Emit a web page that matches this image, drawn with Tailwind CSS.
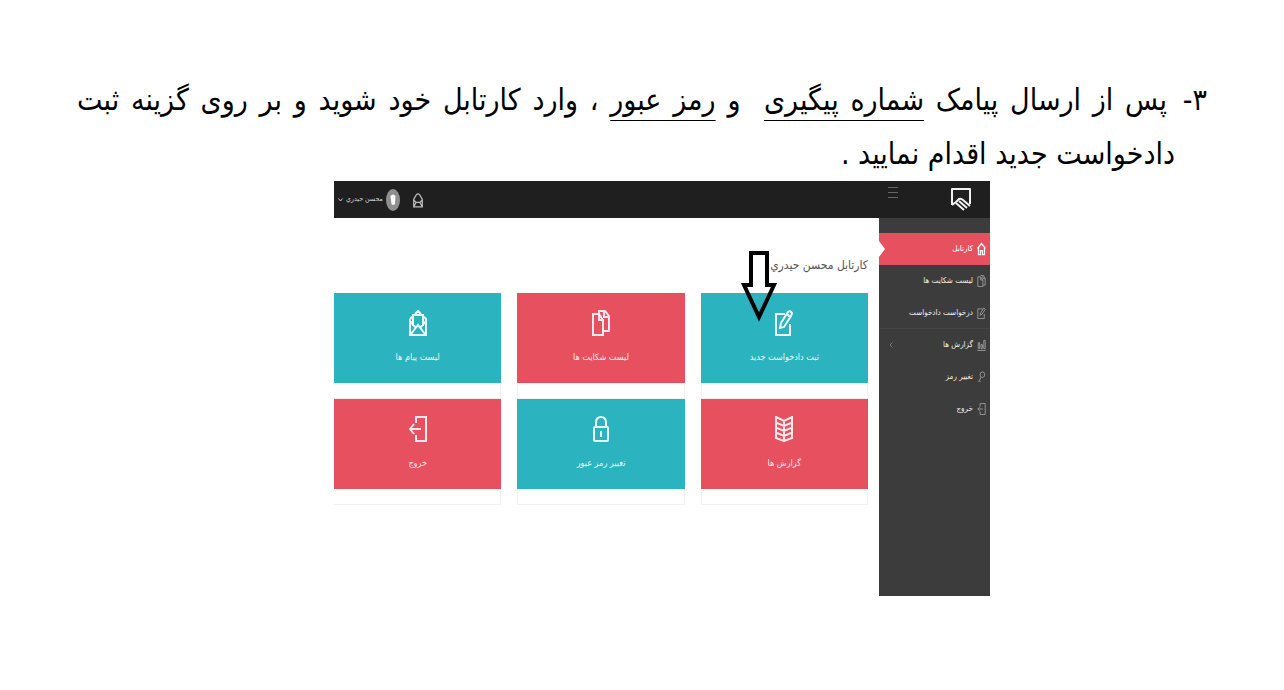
<!DOCTYPE html>
<html lang="fa" dir="rtl">
<head>
    <meta charset="UTF-8">
    <meta name="viewport" content="width=device-width, initial-scale=1.0">
    <title>راهنمای ثبت دادخواست</title>
    <script src="https://cdn.jsdelivr.net/npm/@tailwindcss/browser@4"></script>
</head>
<body class="bg-white text-black font-['DejaVu_Sans_Condensed','DejaVu_Sans',sans-serif]">
    <main class="px-[77px] pt-[73px] pb-[94px]">
        <!-- Step text -->
        <div class="flex text-[30px] leading-[54px]">
            <span class="w-8 shrink-0 whitespace-nowrap">۳-</span>
            <p class="grow">
                <span class="block ps-2 [text-align-last:justify]">پس از ارسال پیامک <span class="underline decoration-1 underline-offset-[10px]">شماره پیگیری</span>&nbsp; و <span class="underline decoration-1 underline-offset-[10px]">رمز عبور</span> ، وارد کارتابل خود شوید و بر روی گزینه ثبت</span>
                <span class="block">دادخواست جدید اقدام نمایید .</span>
            </p>
        </div>

        <!-- Panel -->
        <section class="w-full max-w-[656px] ms-[217px] bg-white">
            <header class="flex items-center h-[37px] bg-[#1f1f1f] text-gray-300 pe-1">
                <a href="#" class="w-[58px] flex justify-center" aria-label="صفحه اصلی">
                    <svg class="w-5 h-6" viewBox="0 0 20 24" fill="none" stroke="#f1f1f1" stroke-width="2" stroke-linejoin="round">
                        <path d="M1 17 V1 H19 V16"/>
                        <path d="M1 17 L5 14 L8 11 Q10 10 12 12 L19 18"/>
                        <path d="M8 13 L16 20 M5 15 L13 22"/>
                    </svg>
                </a>
                <button class="ms-[33px] mb-4" aria-label="منو">
                    <svg class="w-3 h-3" viewBox="0 0 12 12" stroke="#666" stroke-width="1"><path d="M1 1.500 H11 M1 6.500 H11 M1 11.500 H11"/></svg>
                </button>
                <a href="#" class="ms-auto" aria-label="پیام ها">
                    <svg class="w-3 h-4" viewBox="0 0 18 26" fill="none" stroke="#bbb" stroke-width="2"><path d="M2 12 L6 5 Q9 1 12 5 L16 12 V24 H2 Z M2 24 L6 17 H12 L16 24 M2 13 L6 17 M16 13 L12 17"/></svg>
                </a>
                <button class="flex items-center gap-[3px] ms-3 text-[7px]">
                    <svg class="w-[14px] h-[22px]" viewBox="0 0 14 22"><ellipse cx="7" cy="11" rx="7" ry="11" fill="#8f8f8f"/><path d="M4.500 7 Q7 4 9.500 7 L9 15 Q7 17 5.500 15 Z" fill="#fff"/></svg>
                    <span>محسن حيدري</span>
                    <svg class="w-[5px] h-2" viewBox="0 0 5 8" fill="none" stroke="#ccc"><path d="M.5 2.500 L2.500 5 L4.500 2.500"/></svg>
                </button>
            </header>

            <div class="flex">
                <!-- Sidebar -->
                <nav class="w-[111px] shrink-0 bg-[#3c3c3c] pt-[15px] pb-[171px] text-[8px] text-[#f0f0f0]">
                    <a href="#" class="relative flex items-center gap-1 h-8 ps-1 bg-[#e7505f] text-white">
                        <svg class="w-[9px] h-[14px]" viewBox="0 0 18 26" fill="none" stroke="currentColor" stroke-width="2.500"><path d="M1 12 L9 2 L17 12 M3 10 V24 H7 V16 H11 V24 H15 V10"/></svg>
                        <span>کارتابل</span>
                        <svg class="absolute left-0 top-2 w-[6px] h-4" viewBox="0 0 6 16"><path d="M0 0 L6 8 L0 16 Z" fill="#fff"/></svg>
                    </a>
                    <a href="#" class="flex items-center gap-1 h-8 ps-1">
                        <svg class="w-[9px] h-3" viewBox="0 0 18 26" fill="none" stroke="#999" stroke-width="2"><path d="M7 1 H13 L17 7 V22 H12 M12 1 V8 H17 M1 4 H7 L12 11 V25 H1 Z M7 4 V11 H12"/></svg>
                        <span>لیست شکایت ها</span>
                    </a>
                    <a href="#" class="flex items-center gap-1 h-8 ps-1 border-b border-[#454545]">
                        <svg class="w-[9px] h-3" viewBox="0 0 18 26" fill="none" stroke="#999" stroke-width="2"><path d="M11 4 H1 V25 H15 V15 M6 18 L7 13 L14 2 L17 5 L10 16 Z"/></svg>
                        <span>درخواست دادخواست</span>
                    </a>
                    <a href="#" class="flex items-center gap-1 h-8 ps-1">
                        <svg class="w-[9px] h-3" viewBox="0 0 18 26" fill="none" stroke="#999" stroke-width="2"><path d="M0 25 H18 M2 21 V8 H5 V21 Z M8 21 V12 H11 V21 Z M14 21 V3 H17 V21 Z"/></svg>
                        <span>گزارش ها</span>
                        <svg class="w-1 h-[6px] ms-auto me-[10px]" viewBox="0 0 4 6" fill="none" stroke="#777"><path d="M3.500 .5 L1 3 L3.500 5.500"/></svg>
                    </a>
                    <a href="#" class="flex items-center gap-1 h-8 ps-1">
                        <svg class="w-[9px] h-3" viewBox="0 0 18 26" fill="none" stroke="#999" stroke-width="2"><ellipse cx="11" cy="8" rx="5" ry="6"/><path d="M8 13 L3 24 M4 21 L7 24"/></svg>
                        <span>تغییر رمز</span>
                    </a>
                    <a href="#" class="flex items-center gap-1 h-8 ps-1">
                        <svg class="w-[9px] h-3" viewBox="0 0 18 26" fill="none" stroke="#999" stroke-width="2"><path d="M6 8 V1 H17 V25 H6 V18 M12 13 H1 M5 9 L1 13 L5 17"/></svg>
                        <span>خروج</span>
                    </a>
                </nav>

                <!-- Content -->
                <div class="grow ps-[11px] pt-[31px]">
                    <h1 class="relative text-[12px] leading-8 text-[#555] mb-3">
                        کارتابل محسن حيدري
                        <svg class="absolute right-[91px] top-0 z-10 w-9 h-[74px]" viewBox="0 0 36 74" fill="none" stroke="#000" stroke-width="4"><path d="M10 4 H26 V36 H33 L18 68 L3 36 H10 Z"/></svg>
                    </h1>
                    <div class="grid grid-cols-3 gap-x-4">
                        <a href="#" class="border-x border-b border-[#f0f0f0] pb-[15px]">
                            <span class="-mx-px flex flex-col items-center gap-2 h-[90px] pt-[17px] bg-[#2bb3c0] text-[#e9f8f9] text-[9px] leading-[26px]">
                                <svg class="w-[18px] h-[26px]" viewBox="0 0 18 26" fill="none" stroke="currentColor" stroke-width="2"><path d="M10 4 H1 V25 H15 V14 M5 18 L6 13 L13 2 Q15 0 17 3 L16 6 L9 17 Z M12 4 L15 7"/></svg>
                                ثبت دادخواست جدید
                            </span>
                        </a>
                        <a href="#" class="border-x border-b border-[#f0f0f0] pb-[15px]">
                            <span class="-mx-px flex flex-col items-center gap-2 h-[90px] pt-[17px] bg-[#e7505f] text-[#fdeaec] text-[9px] leading-[26px]">
                                <svg class="w-[18px] h-[26px]" viewBox="0 0 18 26" fill="none" stroke="currentColor" stroke-width="2"><path d="M7 4 V1 H13 L17 6 V21 H12 M12 1 V7 H17 M1 4 H7 L11 10 V25 H1 Z M7 4 V10 H11"/></svg>
                                لیست شکایت ها
                            </span>
                        </a>
                        <a href="#" class="border-x border-b border-l-0 border-[#f0f0f0] pb-[15px]">
                            <span class="-mr-px flex flex-col items-center gap-2 h-[90px] pt-[17px] bg-[#2bb3c0] text-[#e9f8f9] text-[9px] leading-[26px]">
                                <svg class="w-[18px] h-[26px]" viewBox="0 0 18 26" fill="none" stroke="currentColor" stroke-width="2"><path d="M1 9 L4 6 M14 6 L17 9 V25 H1 V9 M6 4 L9 1 L12 4 M4 16 V5 H14 V16 M1 11 L7 18 M17 11 L11 18 M2 24 L9 15 L16 24"/></svg>
                                لیست پیام ها
                            </span>
                        </a>
                        <a href="#" class="border-x border-b border-[#f0f0f0] pb-[15px]">
                            <span class="-mx-px flex flex-col items-center gap-2 h-[90px] pt-[17px] bg-[#e7505f] text-[#fdeaec] text-[9px] leading-[26px]">
                                <svg class="w-[18px] h-[26px]" viewBox="0 0 18 26" fill="none" stroke="currentColor" stroke-width="2"><path d="M1 1 L9 5 L17 1 V22 L9 25 L1 22 Z M9 5 V25 M2 7 L9 10 L16 7 M2 12 L9 15 L16 12 M2 17 L9 20 L16 17"/></svg>
                                گزارش ها
                            </span>
                        </a>
                        <a href="#" class="border-x border-b border-[#f0f0f0] pb-[15px]">
                            <span class="-mx-px flex flex-col items-center gap-2 h-[90px] pt-[17px] bg-[#2bb3c0] text-[#e9f8f9] text-[9px] leading-[26px]">
                                <svg class="w-[18px] h-[26px]" viewBox="0 0 18 26" fill="none" stroke="currentColor" stroke-width="2"><rect x="2" y="11" width="14" height="14" rx="1"/><path d="M4 11 V7 Q4 1 9 1 Q14 1 14 7 V11 M9 16 V21 M8 16 H10"/></svg>
                                تغییر رمز عبور
                            </span>
                        </a>
                        <a href="#" class="border-x border-b border-l-0 border-[#f0f0f0] pb-[15px]">
                            <span class="-mr-px flex flex-col items-center gap-2 h-[90px] pt-[17px] bg-[#e7505f] text-[#fdeaec] text-[9px] leading-[26px]">
                                <svg class="w-[18px] h-[26px]" viewBox="0 0 18 26" fill="none" stroke="currentColor" stroke-width="2"><path d="M7 7 V1 H17 V25 H7 V19 M12 13 H1 M5 8 L1 13 L5 18"/></svg>
                                خروج
                            </span>
                        </a>
                    </div>
                </div>
            </div>
        </section>
    </main>
</body>
</html>
